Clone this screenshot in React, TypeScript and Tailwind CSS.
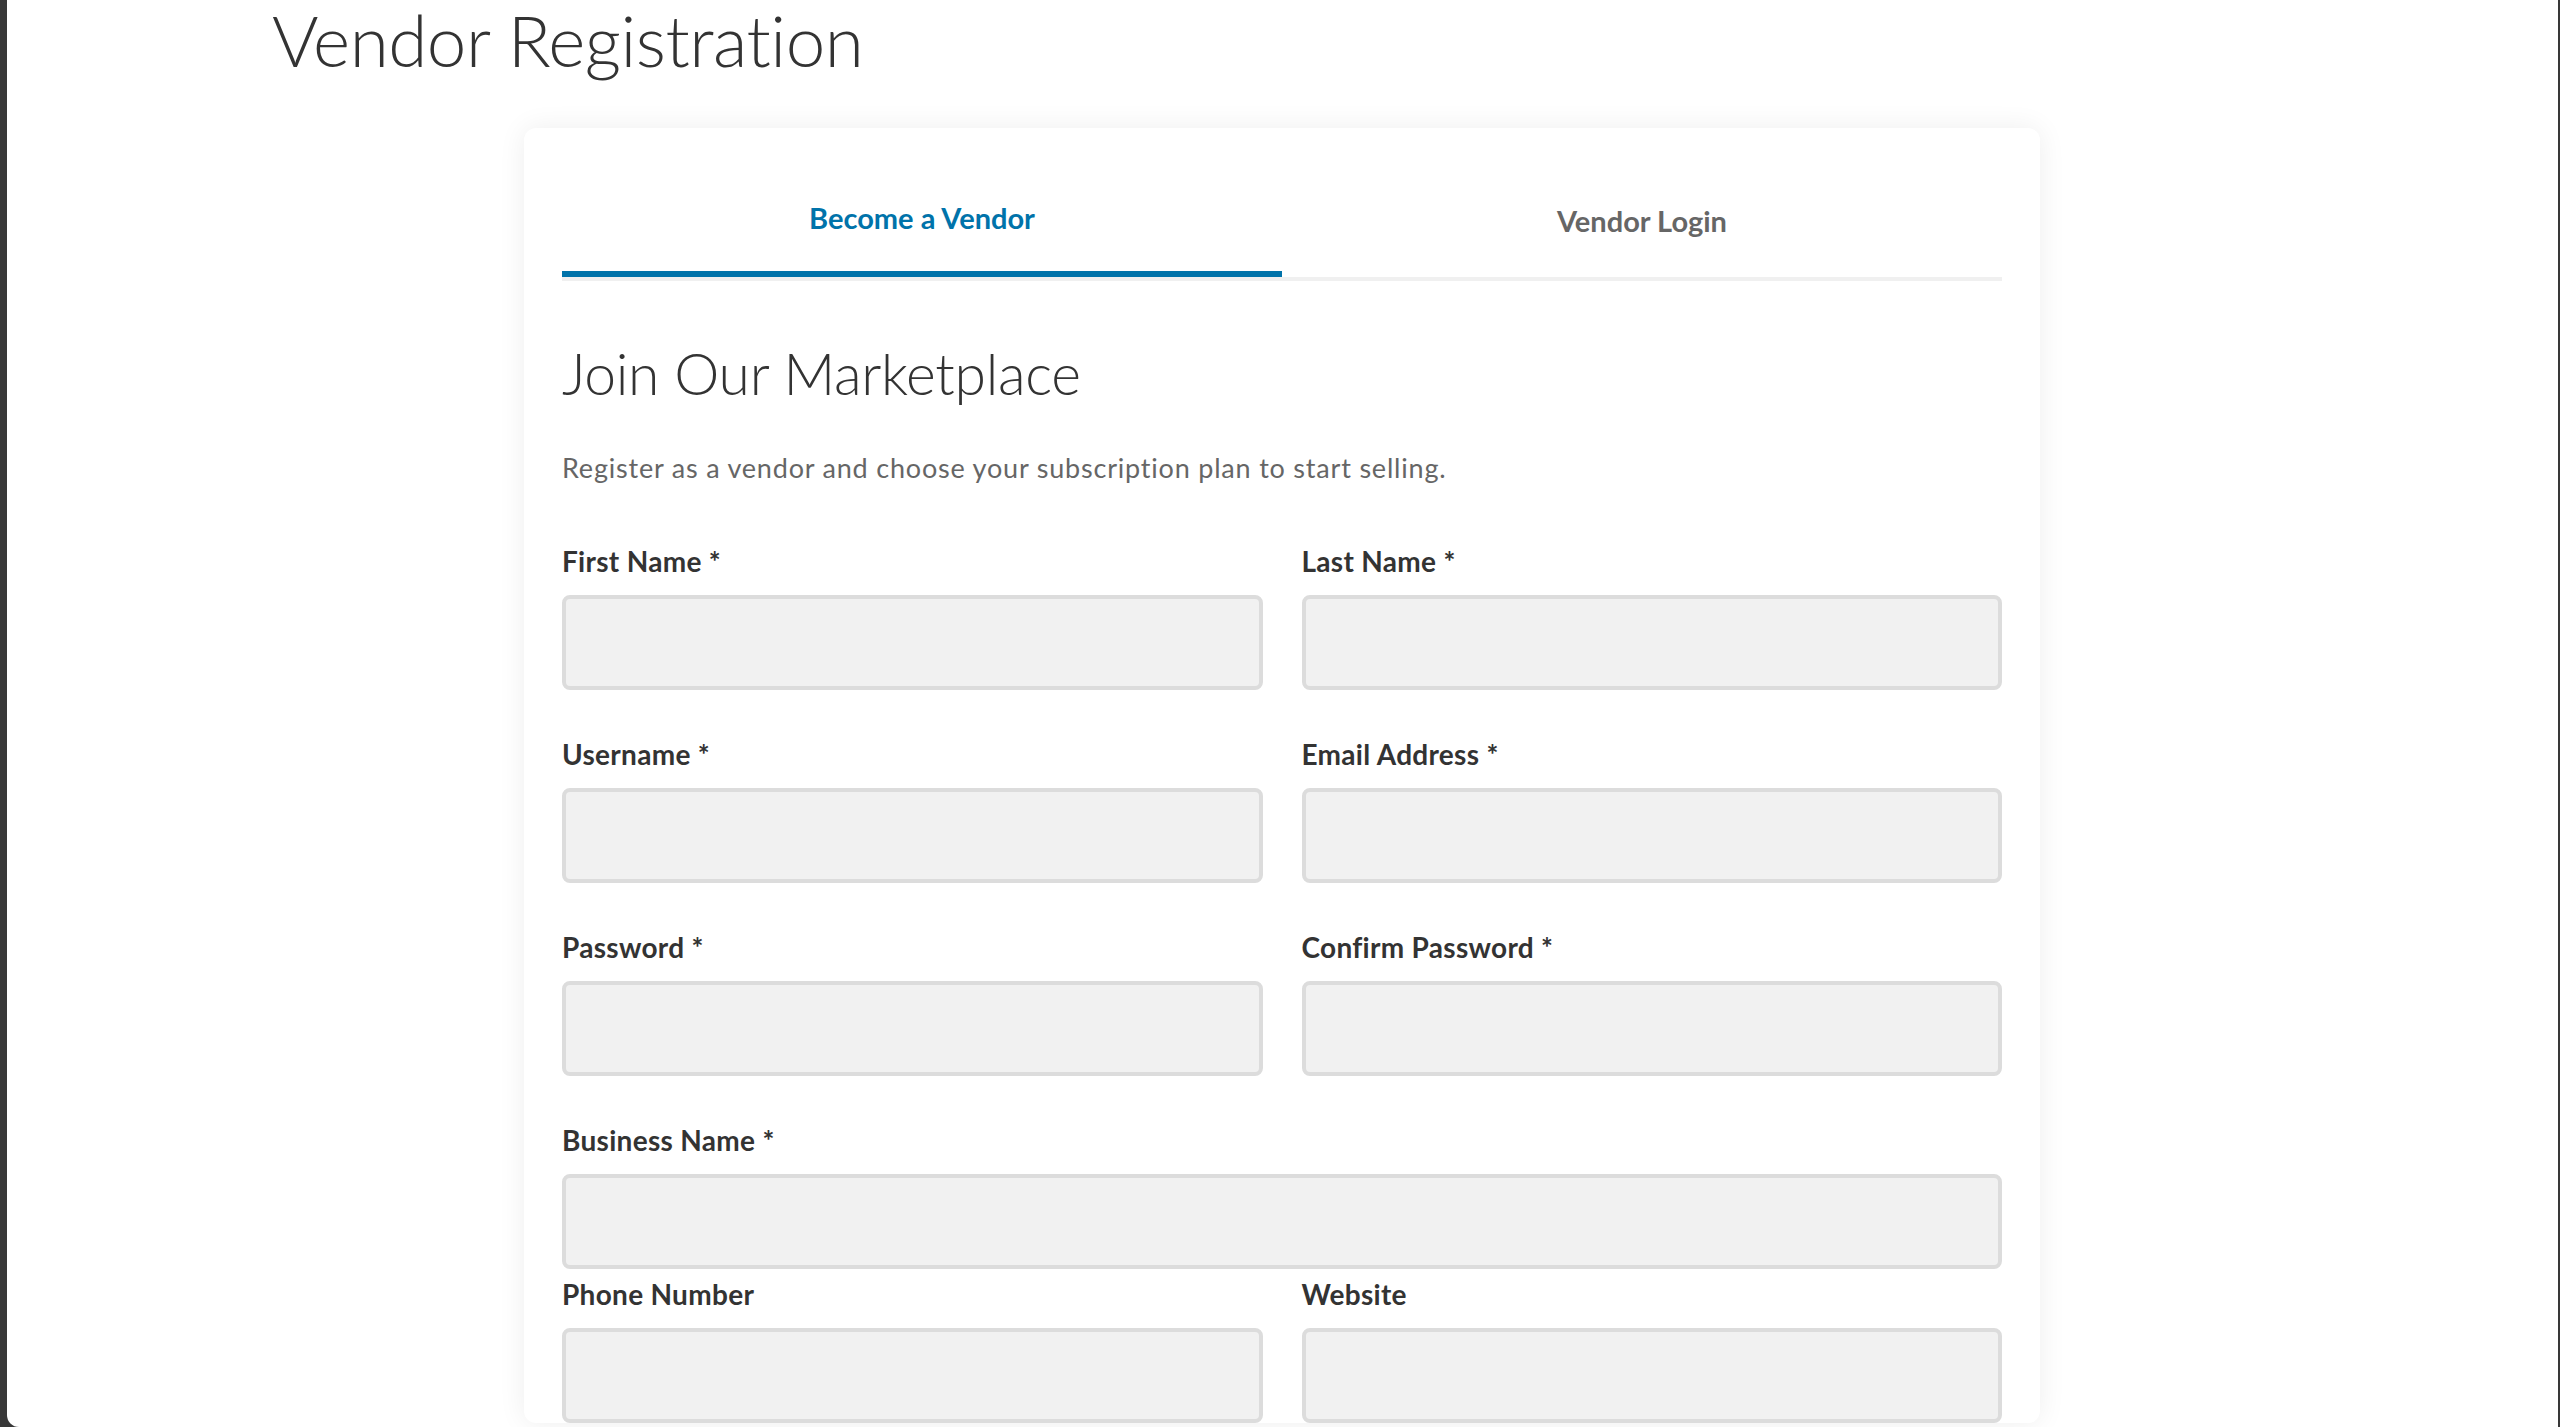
import React from "react";

const font = "font-['Lato','Liberation_Sans',sans-serif]";

type Field = { label: string; wide?: boolean };

function FormField({ label, className = "" }: { label: string; className?: string }) {
  return (
    <div className={className}>
      <label className="block h-[34px] text-[28px] leading-[34px] font-bold text-[#333333] tracking-[0.3px]">{label}</label>
      <input
        type="text"
        className="mt-[17px] block h-[95px] w-full rounded-[8px] border-[4px] border-[#dcdcdc] bg-[#f1f1f1] outline-none"
      />
    </div>
  );
}

const pairs: Field[][] = [
  [{ label: "First Name *" }, { label: "Last Name *" }],
  [{ label: "Username *" }, { label: "Email Address *" }],
  [{ label: "Password *" }, { label: "Confirm Password *" }],
];

export default function App() {
  return (
    <div className={`flex h-[1427px] w-full overflow-hidden bg-[#383838] ${font}`}>
      <div className="ml-[7px] mr-[2px] flex-1 overflow-hidden rounded-bl-[12px] bg-white">
        <h1 className="ml-[265px] text-[71px] leading-[1.12] font-light text-[#333333] tracking-[-0.5px]">Vendor Registration</h1>

        <div className="ml-[517px] mt-[48px] w-[1516px] rounded-[12px] bg-white px-[38px] pt-[38px] shadow-[0_0_28px_rgba(0,0,0,0.07)]">
          <div className="grid grid-cols-2 border-b-[4px] border-[#f0f0f0]">
            <button type="button" className="flex h-[111px] items-center justify-center border-b-[6px] border-[#0073aa] text-[29px] font-bold text-[#0073aa]">
              Become a Vendor
            </button>
            <button type="button" className="flex h-[111px] items-center justify-center text-[29px] font-bold text-[#666666]">
              Vendor Login
            </button>
          </div>

          <h2 className="mt-[58px] text-[57px] leading-[68px] font-light text-[#333333] tracking-[-0.3px]">Join Our Marketplace</h2>
          <p className="mt-[45px] text-[27px] leading-[32px] text-[#666666] tracking-[0.8px]">
            Register as a vendor and choose your subscription plan to start selling.
          </p>

          <div className="mt-[60px] grid grid-cols-2 gap-x-[39px]">
            {pairs.map((row) =>
              row.map((f) => <FormField key={f.label} label={f.label} className="mb-[47px]" />)
            )}
            <FormField label="Business Name *" className="col-span-2 mb-[8px]" />
            <FormField label="Phone Number" />
            <FormField label="Website" />
          </div>
        </div>
      </div>
    </div>
  );
}
